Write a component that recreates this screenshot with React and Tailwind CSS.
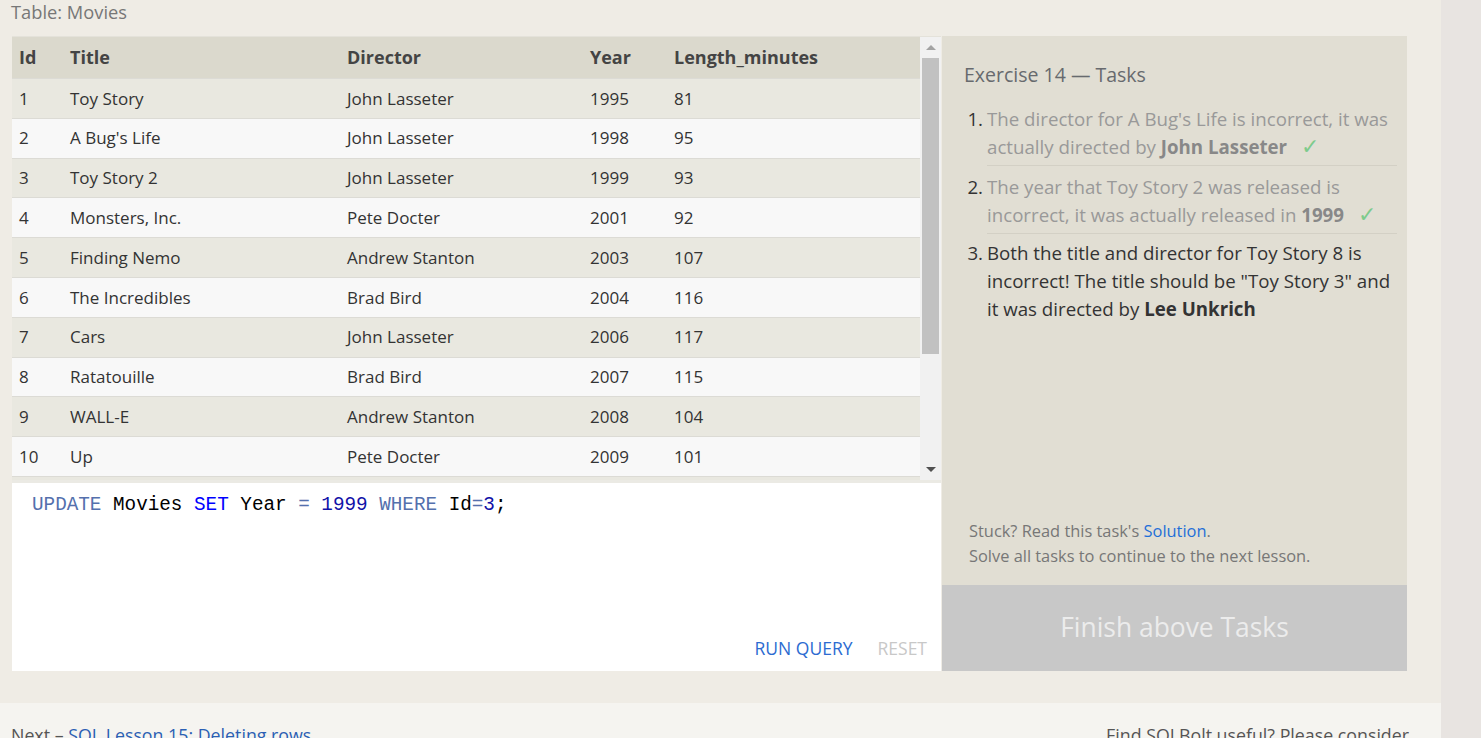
import React from 'react'

const MOVIES = [
  [1, 'Toy Story', 'John Lasseter', 1995, 81],
  [2, "A Bug's Life", 'John Lasseter', 1998, 95],
  [3, 'Toy Story 2', 'John Lasseter', 1999, 93],
  [4, 'Monsters, Inc.', 'Pete Docter', 2001, 92],
  [5, 'Finding Nemo', 'Andrew Stanton', 2003, 107],
  [6, 'The Incredibles', 'Brad Bird', 2004, 116],
  [7, 'Cars', 'John Lasseter', 2006, 117],
  [8, 'Ratatouille', 'Brad Bird', 2007, 115],
  [9, 'WALL-E', 'Andrew Stanton', 2008, 104],
  [10, 'Up', 'Pete Docter', 2009, 101],
]

const FONT = { fontFamily: '"Open Sans", "Noto Sans", sans-serif' }

function Row({ cells, head, odd }) {
  const base = head
    ? 'h-[41px] bg-[#dbd9cd] font-bold text-[#444] text-[18px]'
    : odd
      ? 'h-[39.8px] bg-[#e9e8e0] text-[#333] text-[17px] border-t border-[#dcdbd5]'
      : 'h-[39.8px] bg-[#f8f8f8] text-[#333] text-[17px] border-t border-[#dcdbd5]'
  return (
    <div className={`grid grid-cols-[51px_277px_243px_84px_1fr] items-center ${base}`}>
      {cells.map((c, i) => (
        <div key={i} className="pl-[7px] whitespace-nowrap">{c}</div>
      ))}
    </div>
  )
}

function Scrollbar() {
  return (
    <div className="w-[21px] bg-[#f1f1f1] flex flex-col items-center">
      <div className="h-[21px] flex items-center justify-center">
        <div className="w-0 h-0 border-l-[5px] border-r-[5px] border-b-[5px] border-l-transparent border-r-transparent border-b-[#a3a3a3]" />
      </div>
      <div className="w-[17px] h-[296px] bg-[#c1c1c1]" />
      <div className="flex-1" />
      <div className="h-[21px] flex items-center justify-center">
        <div className="w-0 h-0 border-l-[5px] border-r-[5px] border-t-[5px] border-l-transparent border-r-transparent border-t-[#505050]" />
      </div>
    </div>
  )
}

function Task({ n, done, children, last }) {
  return (
    <li className="flex">
      <span className="w-[25px] shrink-0 text-right pr-[4px] text-[#333]">{n}.</span>
      <div className={`flex-1 pb-[4px] ${last ? '' : 'border-b border-[#d3d0c5]'} ${done ? 'text-[#999]' : 'text-[#333]'}`}>
        {children}
      </div>
    </li>
  )
}

function Check() {
  return (
    <span className="ml-[14px] text-[22px] leading-none text-[#7dcb8c]" style={{ fontFamily: '"DejaVu Sans", sans-serif' }}>✓</span>
  )
}

export default function App() {
  return (
    <div className="flex w-[1481px] h-[738px] overflow-hidden" style={FONT}>
      <div className="w-[1441px] bg-[#efece5] flex flex-col">
        <div className="h-[36px] shrink-0 pl-[11px] text-[18.3px] leading-[24px] text-[#777]">Table: Movies</div>

        <div className="flex shrink-0 pl-[12px]">
          {/* left: results + editor */}
          <div className="w-[929px] flex flex-col">
            <div className="h-[444px] shrink-0 flex border-t border-[#e4e2da]">
              <div className="flex-1 overflow-hidden bg-[#e9e8e0]">
                <Row head cells={['Id', 'Title', 'Director', 'Year', 'Length_minutes']} />
                {MOVIES.map((m, i) => (
                  <Row key={m[0]} cells={m} odd={i % 2 === 0} />
                ))}
                <div className="border-t border-[#dcdbd5]" />
              </div>
              <Scrollbar />
            </div>
            <div className="h-[191px] shrink-0 bg-white flex flex-col border-t-[3px] border-[#ebeae4]">
              <div className="pl-[20px] pt-[10px] text-[19.3px] leading-[24px]" style={{ fontFamily: '"Liberation Mono", "DejaVu Sans Mono", monospace' }}>
                <span className="text-[#5470ad]">UPDATE</span>
                <span className="text-black"> Movies </span>
                <span className="text-[#0000ff]">SET</span>
                <span className="text-black"> Year </span>
                <span className="text-[#5470ad]">=</span>
                <span> </span>
                <span className="text-[#1111a8]">1999</span>
                <span> </span>
                <span className="text-[#5470ad]">WHERE</span>
                <span className="text-black"> Id</span>
                <span className="text-[#5470ad]">=</span>
                <span className="text-[#1111a8]">3</span>
                <span className="text-black">;</span>
              </div>
              <div className="flex-1" />
              <div className="flex justify-end gap-[25px] pr-[14px] pb-[12px] text-[17.5px] leading-[22px]">
                <span className="text-[#2c6bd1]">RUN QUERY</span>
                <span className="text-[#c8c8c8]">RESET</span>
              </div>
            </div>
          </div>

          {/* right: tasks */}
          <div className="w-[465px] ml-[1px] flex flex-col">
            <div className="h-[549px] shrink-0 bg-[#e1ded3] flex flex-col pl-[20px] pr-[10px]">
              <div className="pt-[26px] pl-[2px] text-[19.5px] leading-[26px] text-[#676a6e]">Exercise 14 — Tasks</div>
              <ol className="mt-[17px] text-[18.7px] leading-[28px]">
                <Task n={1} done>
                  <div className="whitespace-nowrap">The director for A Bug's Life is incorrect, it was</div>
                  <div className="whitespace-nowrap">
                    actually directed by <b className="text-[#888]">John Lasseter</b>
                    <Check />
                  </div>
                </Task>
                <div className="h-[7px]" />
                <Task n={2} done>
                  <div className="whitespace-nowrap">The year that Toy Story 2 was released is</div>
                  <div className="whitespace-nowrap">
                    incorrect, it was actually released in <b className="text-[#888]">1999</b>
                    <Check />
                  </div>
                </Task>
                <div className="h-[5px]" />
                <Task n={3} last>
                  <div className="whitespace-nowrap">Both the title and director for Toy Story 8 is</div>
                  <div className="whitespace-nowrap">incorrect! The title should be "Toy Story 3" and</div>
                  <div className="whitespace-nowrap">
                    it was directed by <b className="text-[#333]">Lee Unkrich</b>
                  </div>
                </Task>
              </ol>
              <div className="flex-1" />
              <div className="pl-[7px] pb-[17px] text-[16.4px] leading-[25px] text-[#777]">
                <div>
                  Stuck? Read this task's <span className="text-[#1f6fd8]">Solution</span>.
                </div>
                <div>Solve all tasks to continue to the next lesson.</div>
              </div>
            </div>
            <div className="h-[86px] shrink-0 bg-[#c8c8c8] flex items-center justify-center text-[26.4px] text-[#ececec]">
              Finish above Tasks
            </div>
          </div>
        </div>

        <div className="h-[32px] shrink-0" />

        <div className="flex-1 bg-[#f5f4f0] flex justify-between pl-[11px] pr-[32px] pt-[20px] text-[17.8px] leading-[24px]">
          <div className="text-[#555] whitespace-nowrap">
            Next – <span className="text-[#2b5fb4]">SQL Lesson 15: Deleting rows</span>
          </div>
          <div className="text-[#555] whitespace-nowrap">Find SQLBolt useful? Please consider</div>
        </div>
      </div>
      <div className="flex-1 bg-[#e8e4e1]" />
    </div>
  )
}
